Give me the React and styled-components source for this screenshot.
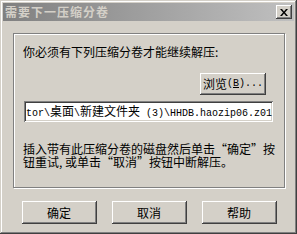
import React from 'react';
import styled, { createGlobalStyle } from 'styled-components';

const GlobalStyle = createGlobalStyle`
  html, body {
    margin: 0;
    padding: 0;
    background: #d4d0c8;
  }
  body {
    font-family: "Noto Sans CJK SC", "Liberation Sans", sans-serif;
    font-size: 12px;
    color: #000;
  }
`;

const Window = styled.div`
  box-sizing: border-box;
  width: 297px;
  height: 234px;
  padding: 3px;
  background: #d4d0c8;
  box-shadow: inset -1px -1px #404040, inset 1px 1px #d4d0c8,
    inset -2px -2px #808080, inset 2px 2px #ffffff;
  display: flex;
  flex-direction: column;
`;

const TitleBar = styled.div`
  height: 18px;
  display: flex;
  align-items: center;
  justify-content: space-between;
  padding: 0 2px 0 2px;
  background: linear-gradient(to right, #808080, #c0c0c0);
`;

const Title = styled.span`
  font-weight: bold;
  font-size: 12px;
  letter-spacing: 1px;
  line-height: 18px;
  color: #d4d0c8;
`;

const CloseButton = styled.div`
  box-sizing: border-box;
  width: 16px;
  height: 14px;
  background: #d4d0c8;
  display: flex;
  align-items: center;
  justify-content: center;
  box-shadow: inset -1px -1px #404040, inset 1px 1px #ffffff,
    inset -2px -2px #808080, inset 2px 2px #d4d0c8;
`;

const Body = styled.div`
  display: flex;
  flex-direction: column;
  padding: 12px 9px 0 10px;
`;

const GroupBox = styled.div`
  box-sizing: border-box;
  height: 155px;
  border: 1px solid #808080;
  box-shadow: 1px 1px 0 #ffffff, inset 1px 1px 0 #ffffff;
  padding: 11px 11px 0 9px;
  display: flex;
  flex-direction: column;
`;

const Label = styled.div`
  line-height: 14px;
  white-space: nowrap;
`;

const ButtonRow = styled.div`
  display: flex;
  justify-content: ${p => (p.$end ? 'flex-end' : 'center')};
  gap: 15px;
  margin-top: ${p => p.$top}px;
  margin-right: ${p => p.$right || 0}px;
`;

const Button = styled.div`
  box-sizing: border-box;
  width: ${p => p.$w}px;
  height: ${p => p.$h}px;
  display: flex;
  align-items: center;
  justify-content: center;
  background: #d4d0c8;
  line-height: 14px;
  white-space: nowrap;
  box-shadow: inset -1px -1px #404040, inset 1px 1px #ffffff,
    inset -2px -2px #808080, inset 2px 2px #d4d0c8;
`;

const Ascii = styled.span`
  font-family: "Liberation Mono", monospace;
  font-size: 10px;
`;

const PathField = styled.div`
  box-sizing: border-box;
  height: 21px;
  margin: 6px 0 0 1px;
  padding: 3px 0 0 2px;
  background: #ffffff;
  line-height: 14px;
  white-space: pre;
  overflow: hidden;
  box-shadow: inset 1px 1px #808080, inset -1px -1px #ffffff,
    inset 2px 2px #404040, inset -2px -2px #d4d0c8;
`;

const Mono = styled.span`
  font-family: "Liberation Mono", monospace;
  font-size: 10px;
`;

const Wide = styled.span`
  font-family: "Noto Sans CJK SC", sans-serif;
  font-size: 12px;
`;

const Message = styled.div`
  margin-top: 20px;
  line-height: 13px;
  white-space: nowrap;
`;

const Quote = styled.span`
  display: inline-block;
  width: 12px;
  text-align: ${p => (p.$open ? 'right' : 'left')};
`;

export default function App() {
  return (
    <>
      <GlobalStyle />
      <Window>
        <TitleBar>
          <Title>需要下一压缩分卷</Title>
          <CloseButton>
            <svg width="8" height="7" viewBox="0 0 8 7">
              <path d="M0 0h2l2 2.5L6 0h2L5 3.5 8 7H6L4 4.5 2 7H0l3-3.5z" fill="#000" />
            </svg>
          </CloseButton>
        </TitleBar>
        <Body>
          <GroupBox>
            <Label>你必须有下列压缩分卷才能继续解压:</Label>
            <ButtonRow $end $top={14} $right={7}>
              <Button $w={66} $h={22}>
                浏览<Ascii>(<u>B</u>)...</Ascii>
              </Button>
            </ButtonRow>
            <PathField>
              <Mono>tor\</Mono><Wide>桌面</Wide><Mono>\</Mono><Wide>新建文件夹</Wide><Mono>{' (3)\\HHDB.haozip06.z01'}</Mono>
            </PathField>
            <Message>
              插入带有此压缩分卷的磁盘然后单击<Quote $open>“</Quote>确定<Quote>”</Quote>按
              <br />
              钮重试, 或单击<Quote $open>“</Quote>取消<Quote>”</Quote>按钮中断解压。
            </Message>
          </GroupBox>
          <ButtonRow $top={13}>
            <Button $w={75} $h={23}>确定</Button>
            <Button $w={75} $h={23}>取消</Button>
            <Button $w={75} $h={23}>帮助</Button>
          </ButtonRow>
        </Body>
      </Window>
    </>
  );
}
